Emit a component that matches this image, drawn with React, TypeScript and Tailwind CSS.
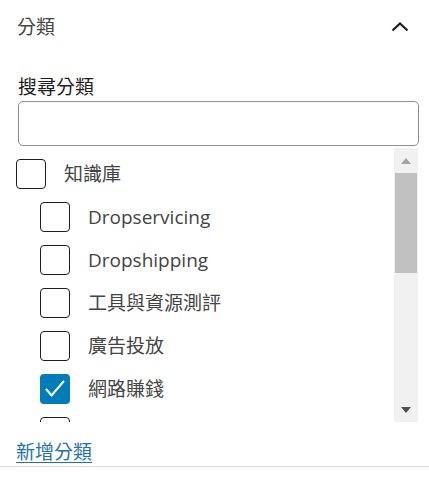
import React from "react";

const font = { fontFamily: "'Open Sans', 'Noto Sans CJK TC', sans-serif" };

const items = [
  { label: "Dropservicing", checked: false },
  { label: "Dropshipping", checked: false },
  { label: "工具與資源測評", checked: false },
  { label: "廣告投放", checked: false },
  { label: "網路賺錢", checked: true },
  { label: "", checked: false },
];

function Box({ checked }: { checked?: boolean }) {
  if (checked) {
    return (
      <span className="flex h-[30px] w-[30px] shrink-0 items-center justify-center rounded-[4px] bg-[#007cba]">
        <svg width="24" height="24" viewBox="0 0 24 24" fill="none">
          <path d="M3.5 12.5l5 6L20.5 4.5" stroke="#fff" strokeWidth="2" strokeLinecap="round" strokeLinejoin="round" />
        </svg>
      </span>
    );
  }
  return <span className="h-[30px] w-[30px] shrink-0 rounded-[4px] border border-[#1e1e1e] bg-white" />;
}

export default function App() {
  return (
    <div className="w-[429px] h-[487px] bg-white text-[#444]" style={font}>
      <div className="flex h-[54px] items-center justify-between pl-[17px] pr-[20px]">
        <span className="text-[19px]">分類</span>
        <svg width="18" height="12" viewBox="0 0 18 12" fill="none">
          <path d="M1.5 9.5L9 2.5l7.5 7" stroke="#1e1e1e" strokeWidth="2.2" />
        </svg>
      </div>
      <div className="pl-[18px] pr-[10px] pt-[20px]">
        <div className="text-[19px] leading-[26px] text-[#1e1e1e]">搜尋分類</div>
        <div className="mt-[1px] h-[45px] rounded-[5px] border border-[#8c8f94]" />
      </div>
      <div className="mt-[2px] flex h-[274px] pr-[11px]">
        <div className="flex-1 overflow-hidden pl-[16px] pt-[11px]">
          <div className="flex h-[30px] items-center gap-[18px]">
            <Box />
            <span className="text-[19px]">知識庫</span>
          </div>
          <div className="flex flex-col gap-[13px] pl-[24px] pt-[13px]">
            {items.map((it, i) => (
              <div key={i} className="flex h-[30px] items-center gap-[18px]">
                <Box checked={it.checked} />
                {it.label && <span className="text-[19px]">{it.label}</span>}
              </div>
            ))}
          </div>
        </div>
        <div className="flex w-[24px] flex-col bg-[#f1f1f1]">
          <div className="flex h-[25px] items-center justify-center">
            <svg width="10" height="6" viewBox="0 0 10 6"><path d="M5 0L10 6H0z" fill="#a3a3a3" /></svg>
          </div>
          <div className="mx-[1px] h-[100px] bg-[#c1c1c1]" />
          <div className="flex-1" />
          <div className="flex h-[25px] items-center justify-center">
            <svg width="10" height="6" viewBox="0 0 10 6"><path d="M0 0h10L5 6z" fill="#505050" /></svg>
          </div>
        </div>
      </div>
      <div className="flex h-[45px] items-end pb-[1px] pl-[16px] border-b border-[#dcdcde]">
        <a className="text-[19px] leading-[26px] text-[#2271b1] underline underline-offset-[3px]">新增分類</a>
      </div>
    </div>
  );
}
